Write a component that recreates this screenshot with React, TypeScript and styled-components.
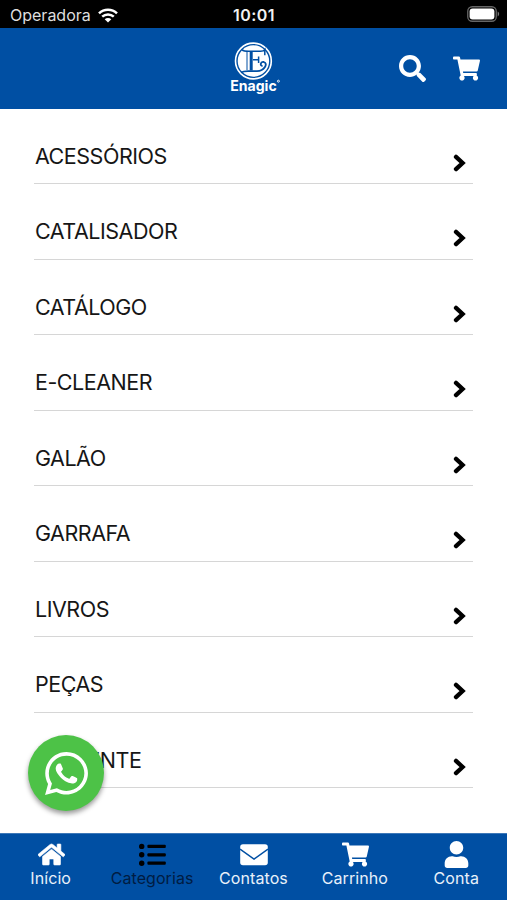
import React from "react";
import styled, { createGlobalStyle } from "styled-components";
import { FaSearch, FaShoppingCart, FaHome, FaUser, FaWhatsapp } from "react-icons/fa";

const GlobalStyle = createGlobalStyle`
  * { box-sizing: border-box; }
  body {
    margin: 0;
    background: #fff;
    font-family: Inter, "Liberation Sans", sans-serif;
  }
`;

const Screen = styled.div`
  position: relative;
  display: flex;
  flex-direction: column;
  width: 507px;
  height: 900px;
  overflow: hidden;
  background: #fff;
`;

const StatusBar = styled.div`
  flex: none;
  display: grid;
  grid-template-columns: 1fr auto 1fr;
  align-items: center;
  height: 28px;
  padding: 2px 8px 0 10px;
  background: #000;
  color: #f2f2f2;
`;

const Carrier = styled.div`
  display: flex;
  align-items: center;
  gap: 7px;
  font-size: 16px;
  letter-spacing: 0;
  color: #dedede;
`;

const Clock = styled.div`
  font-size: 16px;
  font-weight: 600;
  letter-spacing: 0.5px;
  margin-left: -1px;
`;

const BatterySlot = styled.div`
  display: flex;
  justify-content: flex-end;
  margin-top: -2px;
  margin-right: -1px;
`;

const Header = styled.header`
  flex: none;
  display: grid;
  grid-template-columns: 1fr auto 1fr;
  height: 80.5px;
  background: #004fa3;
  color: #fff;
`;

const Brand = styled.div`
  grid-column: 2;
  padding: 12px 0 0 5px;
`;

const HeaderActions = styled.div`
  display: flex;
  justify-content: flex-end;
  align-items: center;
  gap: 27px;
  padding-right: 27px;
`;

const List = styled.ul`
  flex: 1;
  min-height: 0;
  margin: 0;
  padding: 0 34px 0 34px;
  list-style: none;
`;

const Row = styled.li`
  display: flex;
  justify-content: space-between;
  height: 75.5px;
  padding: 34px 7px 0 1px;
  border-bottom: 1px solid #d6d6d6;
`;

const RowLabel = styled.span`
  font-size: 21.5px;
  line-height: 27px;
  letter-spacing: -0.48px;
  color: #161616;
`;

const RowArrow = styled.svg`
  width: 13px;
  height: 18px;
  margin-top: 11px;
`;

const WhatsAppButton = styled.button`
  position: absolute;
  left: 28px;
  top: 735px;
  display: flex;
  align-items: center;
  justify-content: center;
  width: 76px;
  height: 76px;
  padding: 0;
  border: 0;
  border-radius: 50%;
  background: #4dc247;
  color: #fff;
  box-shadow: 0 3px 5px rgba(0, 0, 0, 0.4);
`;

const TabBar = styled.nav`
  flex: none;
  display: grid;
  grid-template-columns: repeat(5, 1fr);
  height: 67.5px;
  background: #004fa3;
  border-top: 1px solid #3d78b8;
`;

const Tab = styled.div<{ $active?: boolean }>`
  display: flex;
  flex-direction: column;
  align-items: center;
  padding-top: 7px;
  color: ${(p) => (p.$active ? "#000" : "#fff")};
`;

const TabIcon = styled.span`
  display: flex;
  align-items: center;
  height: 27px;
  padding-left: 1px;
`;

const TabLabel = styled.span<{ $active?: boolean }>`
  font-size: 16px;
  line-height: 20px;
  letter-spacing: 0.08px;
  white-space: nowrap;
  color: ${(p) => (p.$active ? "#001c42" : "#e9f1fa")};
`;

const WifiIcon = () => (
  <svg width="20" height="15" viewBox="0 0 20 15">
    <g fill="none" stroke="#fff" strokeWidth="2.5">
      <path d="M1 5.3C6 .4 14 .4 19 5.3" />
      <path d="M4.2 8.7c3.3-3.1 8.3-3.1 11.6 0" />
    </g>
    <path d="M10 14.6 6.7 11.2c1.8-1.6 4.8-1.6 6.6 0z" fill="#fff" />
  </svg>
);

const BatteryIcon = () => (
  <svg width="33" height="16" viewBox="0 0 33 16">
    <rect x=".75" y=".75" width="28.5" height="14.5" rx="4.5" fill="none" stroke="#666" strokeWidth="1.3" />
    <rect x="2.6" y="2.6" width="24.8" height="10.8" rx="3" fill="#fff" />
    <path d="M30.7 5.6c1.9.7 1.9 4.1 0 4.8z" fill="#777" />
  </svg>
);

const ChevronIcon = () => (
  <RowArrow viewBox="0 0 13 18">
    <path d="M3 2.9 9.6 9 3 15.1" fill="none" stroke="#000" strokeWidth="4.3" strokeLinecap="round" strokeLinejoin="miter" />
  </RowArrow>
);

const ListIcon = () => (
  <svg width="27" height="27" viewBox="0 0 27 27">
    <g fill="currentColor">
      <circle cx="2.7" cy="5.4" r="2.7" />
      <circle cx="2.7" cy="13.8" r="2.7" />
      <circle cx="2.7" cy="22.2" r="2.7" />
      <rect x="8.4" y="3.8" width="18.4" height="3.2" rx="1" />
      <rect x="8.4" y="12.2" width="18.4" height="3.2" rx="1" />
      <rect x="8.4" y="20.6" width="18.4" height="3.2" rx="1" />
    </g>
  </svg>
);

const MailIcon = () => (
  <svg width="28" height="27" viewBox="0 0 28 27">
    <rect x=".2" y="3.3" width="27.6" height="21" rx="2.8" fill="currentColor" />
    <path d="M0 8.2 14 18.2 28 8.2" fill="none" stroke="#004fa3" strokeWidth="1.5" />
  </svg>
);

const BrandLogo = () => (
  <svg width="52" height="58" viewBox="0 0 52 58">
    <circle cx="23.4" cy="21" r="17.9" fill="none" stroke="#fff" strokeWidth="1.6" />
    <circle cx="23.4" cy="21" r="15.7" fill="#fff" />
    <g fill="none" stroke="#004fa3">
      <path d="M12 9.8c2 1.6 4 1.4 8 1.4h10.5c2 0 3.5-.5 4.3-1.6v5.6" strokeWidth="1.5" />
      <path d="M17 12v18" strokeWidth="1" />
      <path d="M21.2 12v18.5" strokeWidth="3" />
      <path d="M23 19.8h5.5M28.6 16.6v6.4" strokeWidth="1.5" />
      <path d="M11 32.6c3-1.9 5.5-1.4 10-1.4h6c7.5-.2 11.4-7.8 6.8-9.2-3.4-.7-4.2 4-1.2 3.8" strokeWidth="1.8" />
    </g>
    <text
      x="0.2"
      y="50.6"
      fill="#fff"
      fontFamily="Inter, sans-serif"
      fontWeight="700"
      fontSize="14"
      textLength="46.5"
      lengthAdjust="spacingAndGlyphs"
    >
      Enagic
    </text>
    <circle cx="48.4" cy="41.2" r="1" fill="none" stroke="#fff" strokeWidth=".9" />
  </svg>
);

const categories = [
  "ACESSÓRIOS",
  "CATALISADOR",
  "CATÁLOGO",
  "E-CLEANER",
  "GALÃO",
  "GARRAFA",
  "LIVROS",
  "PEÇAS",
  "PRESENTE",
];

const tabs = [
  { label: "Início", icon: <FaHome size={27} stroke="currentColor" strokeWidth={12} /> },
  { label: "Categorias", icon: <ListIcon />, active: true },
  { label: "Contatos", icon: <MailIcon /> },
  { label: "Carrinho", icon: <FaShoppingCart size={27} /> },
  { label: "Conta", icon: <FaUser size={27} /> },
];

export default function App() {
  return (
    <Screen>
      <GlobalStyle />
      <StatusBar>
        <Carrier>
          Operadora <WifiIcon />
        </Carrier>
        <Clock>10:01</Clock>
        <BatterySlot>
          <BatteryIcon />
        </BatterySlot>
      </StatusBar>
      <Header>
        <Brand>
          <BrandLogo />
        </Brand>
        <HeaderActions>
          <FaSearch size={27} />
          <FaShoppingCart size={27} />
        </HeaderActions>
      </Header>
      <List>
        {categories.map((name) => (
          <Row key={name}>
            <RowLabel>{name}</RowLabel>
            <ChevronIcon />
          </Row>
        ))}
      </List>
      <TabBar>
        {tabs.map((tab) => (
          <Tab key={tab.label} $active={tab.active}>
            <TabIcon>{tab.icon}</TabIcon>
            <TabLabel $active={tab.active}>{tab.label}</TabLabel>
          </Tab>
        ))}
      </TabBar>
      <WhatsAppButton aria-label="WhatsApp">
        <FaWhatsapp size={49} />
      </WhatsAppButton>
    </Screen>
  );
}
